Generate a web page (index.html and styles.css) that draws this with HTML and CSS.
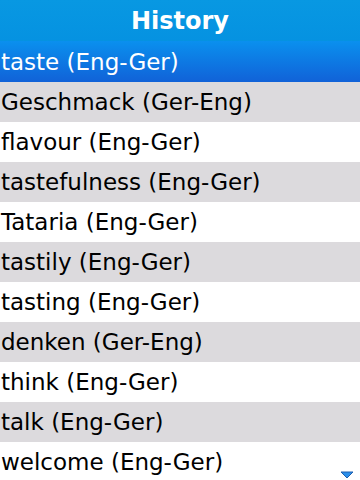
FILE: index.html
```html
<!DOCTYPE html>
<html lang="en">

<head>
    <meta charset="UTF-8">
    <meta name="viewport" content="width=device-width, initial-scale=1.0">
    <title>History</title>
    <link rel="stylesheet" href="styles.css">
</head>

<body>
    <div class="screen">
        <div class="title">History</div>
        <ul class="list">
            <li class="selected">taste (Eng-Ger)</li>
            <li>Geschmack (Ger-Eng)</li>
            <li>flavour (Eng-Ger)</li>
            <li>tastefulness (Eng-Ger)</li>
            <li>Tataria (Eng-Ger)</li>
            <li>tastily (Eng-Ger)</li>
            <li>tasting (Eng-Ger)</li>
            <li>denken (Ger-Eng)</li>
            <li>think (Eng-Ger)</li>
            <li>talk (Eng-Ger)</li>
            <li>welcome (Eng-Ger)</li>
        </ul>
        <svg class="more" width="14" height="8" viewBox="0 0 14 8">
            <polygon points="1,1 13,1 7,7" fill="#2b8fea" stroke="#1f5fae" stroke-width="1"/>
        </svg>
    </div>
</body>

</html>
```

FILE: styles.css
```css
body {
    margin: 0;
    font-family: "DejaVu Sans", sans-serif;
    background: #fff;
}

.screen {
    position: relative;
    width: 360px;
    height: 480px;
    overflow: hidden;
}

.title {
    height: 39px;
    padding-top: 2px;
    line-height: 39px;
    text-align: center;
    color: #fff;
    font-weight: bold;
    font-size: 24px;
    background: linear-gradient(#0898e2, #0592e1);
}

.list {
    list-style: none;
    margin: 0;
    padding: 0;
}

.list li {
    height: 39px;
    padding-top: 1px;
    line-height: 39px;
    padding-left: 1px;
    font-size: 23px;
    color: #000;
    white-space: nowrap;
}

.list li:nth-child(even) {
    background: #dcdadd;
}

.list li.selected {
    height: 40px;
    line-height: 40px;
    color: #fff;
    background: linear-gradient(#0a90ee, #1162d8);
}

.more {
    position: absolute;
    right: 6px;
    bottom: 1px;
}
```
